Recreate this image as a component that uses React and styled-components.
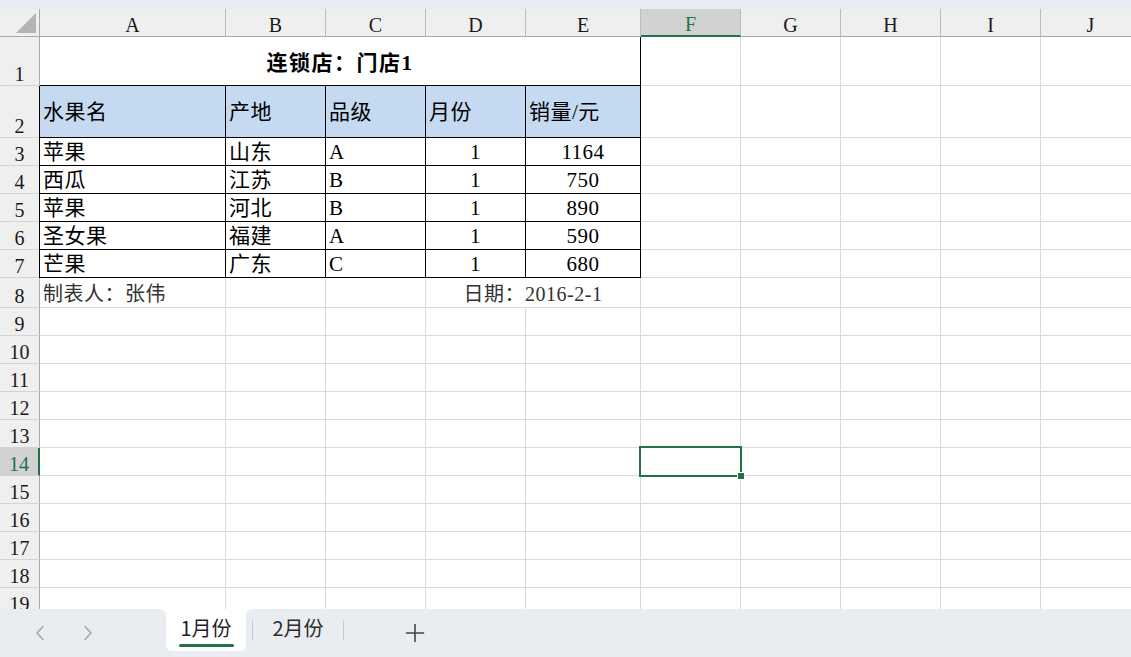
import React from 'react';
import styled, { createGlobalStyle } from 'styled-components';

const GREEN = '#217346';

const GlobalStyle = createGlobalStyle`
  html, body { margin: 0; padding: 0; background: #fff; overflow: hidden; }
  #root { width: 1131px; height: 657px; }
`;

const COLS = ['A', 'B', 'C', 'D', 'E', 'F', 'G', 'H', 'I', 'J'];
const COL_WIDTHS = [186, 100, 100, 100, 115, 100, 100, 100, 100, 100];
const ROW_HEIGHTS = [49, 52, 28, 28, 28, 28, 28, 30, 28, 28, 28, 28, 28, 28, 28, 28, 28, 28, 28];
const ACTIVE_COL = 5;
const ACTIVE_ROW = 14;

const Window = styled.div`
  display: flex;
  flex-direction: column;
  width: 1131px;
  height: 657px;
  background: #e9ecf0;
`;

const TopStrip = styled.div`
  height: 9px;
  flex: none;
  background: #e8ebf0;
`;

const Sheet = styled.div`
  flex: 1;
  min-height: 0;
  overflow: hidden;
  background: #fff;
`;

const Grid = styled.div`
  display: grid;
  grid-template-columns: 40px ${COL_WIDTHS.map((w) => `${w}px`).join(' ')};
  grid-template-rows: 28px ${ROW_HEIGHTS.map((h) => `${h}px`).join(' ')};
  width: max-content;
  font-family: "Liberation Serif", "Noto Sans CJK SC", serif;
  color: #000;
`;

const Corner = styled.div`
  position: relative;
  box-sizing: border-box;
  background: #efefef;
  border-right: 1px solid #a8a8a8;
  border-bottom: 1px solid #a8a8a8;

  &::after {
    content: '';
    position: absolute;
    right: 3px;
    bottom: 3px;
    width: 20px;
    height: 20px;
    background: #b4b4b4;
    clip-path: polygon(100% 0, 100% 100%, 0 100%);
  }
`;

const ColHead = styled.div`
  box-sizing: border-box;
  display: flex;
  align-items: flex-end;
  justify-content: center;
  padding-bottom: 1px;
  background: ${(p) => (p.$active ? '#d2d2d2' : '#efefef')};
  border-right: 1px solid #bcbcbc;
  border-bottom: ${(p) => (p.$active ? `2px solid ${GREEN}` : '1px solid #a8a8a8')};
  color: ${(p) => (p.$active ? GREEN : '#1a1a1a')};
  font-size: 20px;
  line-height: 1;
`;

const RowHead = styled.div`
  box-sizing: border-box;
  display: flex;
  align-items: flex-end;
  justify-content: center;
  padding-bottom: 1px;
  background: ${(p) => (p.$active ? '#d2d2d2' : '#efefef')};
  border-right: ${(p) => (p.$active ? `2px solid ${GREEN}` : '1px solid #a8a8a8')};
  border-bottom: 1px solid #d4d4d4;
  color: ${(p) => (p.$active ? GREEN : '#1a1a1a')};
  font-size: 20px;
  line-height: 1;
`;

const Cell = styled.div`
  position: relative;
  box-sizing: border-box;
  grid-column: span ${(p) => p.$span || 1};
  display: flex;
  align-items: center;
  justify-content: ${(p) => (p.$align === 'center' ? 'center' : 'flex-start')};
  padding: ${(p) => (p.$title ? 4 : 2)}px 3px 0;
  border-right: 1px solid ${(p) => (p.$boxed ? '#000' : '#dadada')};
  border-bottom: 1px solid ${(p) => (p.$boxed ? '#000' : '#dadada')};
  background: ${(p) => (p.$fill ? '#c5d9f1' : '#fff')};
  box-shadow: ${(p) => (p.$lead ? '-1px 0 0 #000' : 'none')};
  font-size: ${(p) => (p.$note ? 20 : 21)}px;
  font-weight: ${(p) => (p.$title ? 700 : 400)};
  letter-spacing: ${(p) => (p.$title ? '1.5px' : '0.5px')};
  color: ${(p) => (p.$note ? '#333' : '#000')};
  line-height: 1;
  white-space: nowrap;
`;

const Selection = styled.div`
  position: absolute;
  left: -2px;
  top: -2px;
  width: 103px;
  height: 31px;
  box-sizing: border-box;
  border: 2px solid ${GREEN};
  z-index: 2;
  pointer-events: none;
`;

const FillHandle = styled.div`
  position: absolute;
  left: 96px;
  top: 24px;
  width: 8px;
  height: 8px;
  box-sizing: border-box;
  background: ${GREEN};
  border: 1px solid #fff;
`;

/* bottom sheet tab strip */
const TabBar = styled.div`
  height: 48px;
  flex: none;
  display: flex;
  align-items: flex-start;
  background: #e9ecf0;
  font-family: "Noto Sans CJK SC", "Noto Sans", sans-serif;
`;

const NavGroup = styled.div`
  width: 166px;
  height: 48px;
  display: flex;
  align-items: center;
  gap: 24px;
  padding-left: 28px;
  box-sizing: border-box;
`;

const NavButton = styled.div`
  width: 24px;
  height: 24px;
  display: flex;
  align-items: center;
  justify-content: center;
  color: #a6a6a6;
`;

const SheetTab = styled.div`
  position: relative;
  box-sizing: border-box;
  width: ${(p) => (p.$active ? 80 : 90)}px;
  height: 42px;
  display: flex;
  flex-direction: column;
  align-items: center;
  padding-top: 7px;
  background: ${(p) => (p.$active ? '#fff' : 'transparent')};
  border-radius: 0 0 6px 6px;
  color: ${(p) => (p.$active ? '#1f1f1f' : '#2b2b2b')};

  ${(p) =>
    p.$active &&
    `
    &::before, &::after {
      content: '';
      position: absolute;
      top: 0;
      width: 6px;
      height: 6px;
    }
    &::before {
      left: -6px;
      background: radial-gradient(circle at 0 100%, #e9ecf0 5.5px, #fff 6px);
    }
    &::after {
      right: -6px;
      background: radial-gradient(circle at 100% 100%, #e9ecf0 5.5px, #fff 6px);
    }
  `}
`;

const TabLabel = styled.span`
  font-size: 20px;
  line-height: 24px;
`;

const TabUnderline = styled.span`
  width: 55px;
  height: 3px;
  margin-top: 4px;
  border-radius: 2px;
  background: ${GREEN};
`;

const TabDivider = styled.span`
  width: 1px;
  height: 20px;
  margin-top: 11px;
  margin-left: ${(p) => p.$gap || 0}px;
  background: #c6c9cd;
`;

const AddButton = styled.div`
  width: 40px;
  height: 48px;
  margin-left: 51px;
  display: flex;
  align-items: center;
  justify-content: center;
  color: #444;
`;

const header = ['水果名', '产地', '品级', '月份', '销量/元'];
const rows = [
  ['苹果', '山东', 'A', '1', '1164'],
  ['西瓜', '江苏', 'B', '1', '750'],
  ['苹果', '河北', 'B', '1', '890'],
  ['圣女果', '福建', 'A', '1', '590'],
  ['芒果', '广东', 'C', '1', '680'],
];

function bodyCells(r) {
  if (r === 1) {
    return [
      <Cell key="t" $span={5} $boxed $title $align="center">连锁店：门店1</Cell>,
    ];
  }
  if (r === 2) {
    return header.map((h, i) => (
      <Cell key={i} $boxed $fill $lead={i === 0}>{h}</Cell>
    ));
  }
  if (r >= 3 && r <= 7) {
    return rows[r - 3].map((v, i) => (
      <Cell key={i} $boxed $lead={i === 0} $align={i >= 3 ? 'center' : 'left'}>{v}</Cell>
    ));
  }
  if (r === 8) {
    return [
      <Cell key="a" $note>制表人：张伟</Cell>,
      <Cell key="b" />,
      <Cell key="c" />,
      <Cell key="d" $span={2} $note $align="center">日期：2016-2-1</Cell>,
    ];
  }
  return [0, 1, 2, 3, 4].map((i) => <Cell key={i} />);
}

const ChevronLeft = () => (
  <svg width="12" height="16" viewBox="0 0 12 16" fill="none">
    <path d="M9 1.5 L3 8 L9 14.5" stroke="currentColor" strokeWidth="1.6" strokeLinecap="round" strokeLinejoin="round" />
  </svg>
);

const ChevronRight = () => (
  <svg width="12" height="16" viewBox="0 0 12 16" fill="none">
    <path d="M3 1.5 L9 8 L3 14.5" stroke="currentColor" strokeWidth="1.6" strokeLinecap="round" strokeLinejoin="round" />
  </svg>
);

const PlusIcon = () => (
  <svg width="20" height="20" viewBox="0 0 20 20" fill="none">
    <path d="M10 1.5 V18.5 M1.5 10 H18.5" stroke="currentColor" strokeWidth="1.6" strokeLinecap="round" />
  </svg>
);

export default function App() {
  return (
    <>
      <GlobalStyle />
      <Window>
        <TopStrip />
        <Sheet>
          <Grid>
            <Corner />
            {COLS.map((c, i) => (
              <ColHead key={c} $active={i === ACTIVE_COL}>{c}</ColHead>
            ))}
            {ROW_HEIGHTS.map((_, idx) => {
              const r = idx + 1;
              return (
                <React.Fragment key={r}>
                  <RowHead $active={r === ACTIVE_ROW}>{r}</RowHead>
                  {bodyCells(r)}
                  {[5, 6, 7, 8, 9].map((c) => (
                    <Cell key={`x${c}`}>
                      {r === ACTIVE_ROW && c === ACTIVE_COL && (
                        <Selection>
                          <FillHandle />
                        </Selection>
                      )}
                    </Cell>
                  ))}
                </React.Fragment>
              );
            })}
          </Grid>
        </Sheet>
        <TabBar>
          <NavGroup>
            <NavButton><ChevronLeft /></NavButton>
            <NavButton><ChevronRight /></NavButton>
          </NavGroup>
          <SheetTab $active>
            <TabLabel>1月份</TabLabel>
            <TabUnderline />
          </SheetTab>
          <TabDivider $gap={6} />
          <SheetTab>
            <TabLabel>2月份</TabLabel>
          </SheetTab>
          <TabDivider />
          <AddButton><PlusIcon /></AddButton>
        </TabBar>
      </Window>
    </>
  );
}
